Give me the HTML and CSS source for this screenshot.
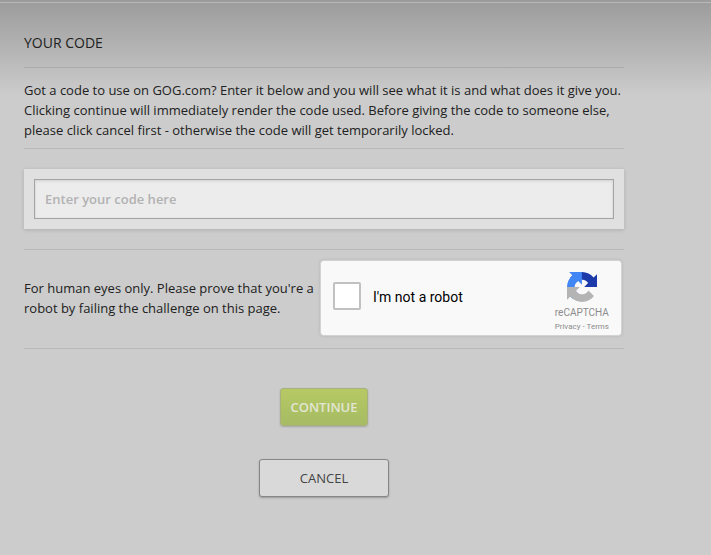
FILE: index.html
```html
<!DOCTYPE html>
<html lang="en">
<head>
<meta charset="utf-8">
<meta name="viewport" content="width=device-width, initial-scale=1">
<title>Your code</title>
<link rel="stylesheet" href="styles.css">
</head>
<body>
<main class="page">
  <form class="redeem">
    <h1 class="title">YOUR CODE</h1>
    <p class="intro">Got a code to use on GOG.com? Enter it below and you will see what it is and what does it give you. Clicking continue will immediately render the code used. Before giving the code to someone else, please click cancel first - otherwise the code will get temporarily locked.</p>
    <div class="code-row">
      <div class="code-panel">
        <input class="code-input" type="text" aria-label="Enter your code here" placeholder="Enter your code here">
      </div>
    </div>
    <div class="human">
      <p class="human-text">For human eyes only. Please prove that you're a robot by failing the challenge on this page.</p>
      <div class="captcha">
        <input class="captcha-box" type="checkbox" id="robot">
        <label class="captcha-label" for="robot">I'm not a robot</label>
        <div class="captcha-brand">
          <svg class="captcha-logo" viewBox="0 0 64 64" aria-hidden="true">
            <path fill="#1c3aa9" d="M64 31.955l-.033-1.37V4.687l-7.16 7.16C50.948 4.674 42.033.093 32.05.093c-10.4 0-19.622 4.96-25.458 12.64l11.736 11.86a15.55 15.55 0 0 1 4.754-5.334c2.05-1.6 4.952-2.906 8.968-2.906.485 0 .86.057 1.135.163 4.976.393 9.288 3.14 11.828 7.124l-8.307 8.307L64 31.953"/>
            <path fill="#4285f4" d="M31.862.094l-1.37.033H4.594l7.16 7.16C4.58 13.147 0 22.06 0 32.046c0 10.4 4.96 19.622 12.64 25.458L24.5 45.768a15.55 15.55 0 0 1-5.334-4.754c-1.6-2.05-2.906-4.952-2.906-8.968 0-.485.057-.86.163-1.135.393-4.976 3.14-9.288 7.124-11.828l8.307 8.307L31.86.095"/>
            <path fill="#b4b4b4" d="M.001 32.045l.033 1.37v25.898l7.16-7.16c5.86 7.173 14.774 11.754 24.76 11.754 10.4 0 19.622-4.96 25.458-12.64l-11.736-11.86a15.55 15.55 0 0 1-4.754 5.334c-2.05 1.6-4.952 2.906-8.968 2.906-.485 0-.86-.057-1.135-.163-4.976-.393-9.288-3.14-11.828-7.124l8.307-8.307c-10.522.04-22.4.066-27.295-.005"/>
          </svg>
          <div class="captcha-name">reCAPTCHA</div>
          <div class="captcha-links"><a href="#privacy">Privacy</a> - <a href="#terms">Terms</a></div>
        </div>
      </div>
    </div>
    <div class="actions">
      <button class="button continue" type="submit">CONTINUE</button>
      <button class="button cancel" type="button">CANCEL</button>
    </div>
  </form>
</main>
</body>
</html>
```
FILE: styles.css
```css
* {
  box-sizing: border-box;
}

body {
  margin: 0;
  min-height: 100vh;
  background: #ccc linear-gradient(#9b9b9b, #ccc) 0 0 / 100% 96px no-repeat;
  color: #212121;
  font: 13px/20px "Open Sans", "Noto Sans", sans-serif;
}

.page {
  padding: 0 24px 24px;
}

/* Light hairline just under the top edge of the dialog */
.page::before {
  content: "";
  display: block;
  height: 2px;
  margin: 0 -24px;
  border-bottom: 1px solid #b8b8b8;
}

.redeem {
  max-width: 600px;
}

.title {
  margin: 0;
  padding: 30px 0 15px;
  border-bottom: 1px solid rgba(0, 0, 0, 0.1);
  font-size: 14px;
  font-weight: 500;
  line-height: 19px;
}

.intro {
  margin: 0;
  padding: 12px 0 8px;
  border-bottom: 1px solid #b9b9b9;
}

.code-row {
  padding: 20px 0;
  border-bottom: 1px solid #b9b9b9;
}

.code-panel {
  padding: 10px;
  background: #e0e0e0;
  box-shadow: 0 1px 4px rgba(0, 0, 0, 0.15);
}

.code-input {
  display: block;
  width: 100%;
  height: 40px;
  padding: 0 10px;
  border: 1px solid #a4a4a4;
  border-radius: 0;
  outline: 0;
  background: #ececec;
  box-shadow: inset 0 1px 3px rgba(0, 0, 0, 0.12);
  color: #333;
  font: 600 13px "Open Sans", "Noto Sans", sans-serif;
}

.code-input::placeholder {
  color: #b2b2b2;
  opacity: 1;
}

.human {
  display: flex;
  align-items: center;
  justify-content: space-between;
  padding: 10px 2px 12px 0;
  border-bottom: 1px solid #b9b9b9;
}

.human-text {
  flex: 1;
  margin: 0;
}

.captcha {
  display: flex;
  align-items: center;
  width: 302px;
  height: 76px;
  padding: 0 12px;
  border: 1px solid #d3d3d3;
  border-radius: 3px;
  background: #f9f9f9;
  background-clip: padding-box;
  box-shadow: 0 0 3px rgba(0, 0, 0, 0.12);
}

.captcha-box {
  appearance: none;
  width: 28px;
  height: 28px;
  margin: 0 12px 4px 0;
  border: 2px solid #c1c1c1;
  border-radius: 2px;
  background: #fff;
}

.captcha-label {
  flex: 1;
  padding-bottom: 2px;
  color: #000;
  font: 14px/20px Roboto, sans-serif;
}

.captcha-brand {
  align-self: flex-start;
  padding-top: 11px;
  color: #8c8c8c;
  font-family: Roboto, sans-serif;
  text-align: center;
}

.captcha-logo {
  display: block;
  width: 30px;
  height: 30px;
  margin: 0 auto 4px;
}

.captcha-name {
  font-size: 10px;
  line-height: 14px;
}

.captcha-links {
  font-size: 8px;
  line-height: 14px;
}

.captcha-links a {
  color: inherit;
  text-decoration: none;
}

.actions {
  display: flex;
  flex-direction: column;
  align-items: center;
  gap: 33px;
  padding-top: 39px;
}

.button {
  height: 38px;
  padding: 0;
  border-radius: 3px;
  font: 600 13px/20px "Open Sans", "Noto Sans", sans-serif;
}

.continue {
  width: 88px;
  border: 1px solid #a8b07c;
  background: linear-gradient(#b6c964, #a6bb64);
  box-shadow: 0 1px 2px rgba(0, 0, 0, 0.2);
  color: #e2e6d4;
}

.cancel {
  width: 130px;
  border: 1px solid #868686;
  background: #d9d9d9;
  box-shadow: 0 1px 2px rgba(0, 0, 0, 0.25);
  color: #444;
  font-weight: 500;
}
```
